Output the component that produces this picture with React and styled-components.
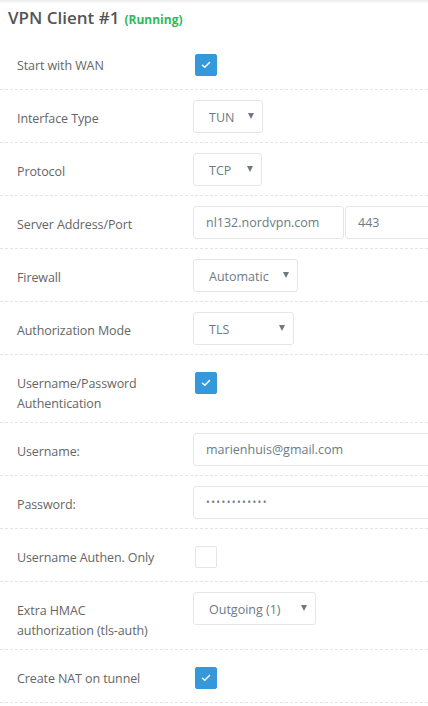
import React from "react";
import styled, { createGlobalStyle } from "styled-components";

const Global = createGlobalStyle`
  html, body { margin: 0; padding: 0; background: #fff; }
  body { font-family: "Open Sans", "Noto Sans", sans-serif; overflow: hidden; }
`;

const Page = styled.div`
  width: 428px;
  height: 706px;
  overflow: hidden;
  background: #fff;
  position: relative;
`;

const TopShade = styled.div`
  height: 4px;
  background: linear-gradient(#ececec, #fff);
`;

const Heading = styled.h3`
  margin: 0;
  padding: 2px 8px 0 8px;
  height: 31px;
  font-size: 17px;
  font-weight: 600;
  color: #555;
  display: flex;
  align-items: baseline;
  gap: 5px;
  line-height: 24px;
`;

const Status = styled.span`
  font-size: 12px;
  font-weight: 700;
  color: #2eb85c;
`;

const Row = styled.div`
  display: grid;
  grid-template-columns: 193px 1fr;
  padding: 10px 0 9px 0;
  border-bottom: 1px dashed #e4e4e4;
  min-height: 33px;
`;

const Label = styled.div`
  padding: 9px 0 0 17px;
  font-size: 12.5px;
  line-height: 19.5px;
  color: #666;
  letter-spacing: -0.1px;
`;

const Control = styled.div`
  display: flex;
  align-items: flex-start;
  min-width: 0;
`;

const Select = styled.div`
  box-sizing: border-box;
  width: ${(p) => p.$w}px;
  height: 33px;
  border: 1px solid #e3e7ea;
  border-radius: 3px;
  display: flex;
  align-items: center;
  padding: 2px 0 0 15px;
  font-size: 12.5px;
  color: #6d7a85;
  position: relative;
`;

const Arrow = styled.span`
  position: absolute;
  right: 8px;
  top: 12px;
  width: 0;
  height: 0;
  border-left: 3.5px solid transparent;
  border-right: 3.5px solid transparent;
  border-top: 6px solid #6d7a85;
`;

const Input = styled.div`
  box-sizing: border-box;
  width: ${(p) => (p.$w ? `${p.$w}px` : "auto")};
  flex: ${(p) => (p.$w ? "0 0 auto" : "1 1 auto")};
  height: 33px;
  border: 1px solid #e3e7ea;
  border-radius: 3px;
  display: flex;
  align-items: center;
  padding-left: 12px;
  font-size: 12.5px;
  color: #6d7a85;
  margin-right: ${(p) => (p.$w ? "1px" : "-20px")};
  white-space: nowrap;
`;

const Dots = styled.span`
  letter-spacing: 1.4px;
  font-size: 10px;
  position: relative;
  top: -1px;
`;

const Check = styled.div`
  box-sizing: border-box;
  width: 22px;
  height: 22px;
  margin: 7px 0 0 2px;
  border-radius: 2px;
  background: ${(p) => (p.$on ? "#3498db" : "#fff")};
  border: 1px solid ${(p) => (p.$on ? "#3498db" : "#e3e7ea")};
  display: flex;
  align-items: center;
  justify-content: center;
`;

const Tick = () => (
  <svg width="10" height="8" viewBox="0 0 10 8" fill="none">
    <path d="M1.5 4.2 L3.8 6.3 L8.5 1.5" stroke="#fff" strokeWidth="1.5" strokeLinecap="round" strokeLinejoin="round" />
  </svg>
);

const Checkbox = ({ on }) => <Check $on={on}>{on && <Tick />}</Check>;

const Sel = ({ w, children }) => (
  <Select $w={w}>
    {children}
    <Arrow />
  </Select>
);

export default function App() {
  return (
    <Page>
      <Global />
      <TopShade />
      <Heading>
        VPN Client #1 <Status>(Running)</Status>
      </Heading>
      <Row>
        <Label>Start with WAN</Label>
        <Control><Checkbox on /></Control>
      </Row>
      <Row>
        <Label>Interface Type</Label>
        <Control><Sel w={70}>TUN</Sel></Control>
      </Row>
      <Row>
        <Label>Protocol</Label>
        <Control><Sel w={69}>TCP</Sel></Control>
      </Row>
      <Row>
        <Label>Server Address/Port</Label>
        <Control>
          <Input $w={151}>nl132.nordvpn.com</Input>
          <Input>443</Input>
        </Control>
      </Row>
      <Row>
        <Label>Firewall</Label>
        <Control><Sel w={105}>Automatic</Sel></Control>
      </Row>
      <Row>
        <Label>Authorization Mode</Label>
        <Control><Sel w={101}>TLS</Sel></Control>
      </Row>
      <Row>
        <Label>Username/Password<br />Authentication</Label>
        <Control><Checkbox on /></Control>
      </Row>
      <Row>
        <Label>Username:</Label>
        <Control><Input>marienhuis@gmail.com</Input></Control>
      </Row>
      <Row>
        <Label>Password:</Label>
        <Control><Input><Dots>••••••••••••</Dots></Input></Control>
      </Row>
      <Row>
        <Label>Username Authen. Only</Label>
        <Control><Checkbox /></Control>
      </Row>
      <Row>
        <Label>Extra HMAC<br />authorization (tls-auth)</Label>
        <Control><Sel w={123}>Outgoing (1)</Sel></Control>
      </Row>
      <Row>
        <Label>Create NAT on tunnel</Label>
        <Control><Checkbox on /></Control>
      </Row>
    </Page>
  );
}
